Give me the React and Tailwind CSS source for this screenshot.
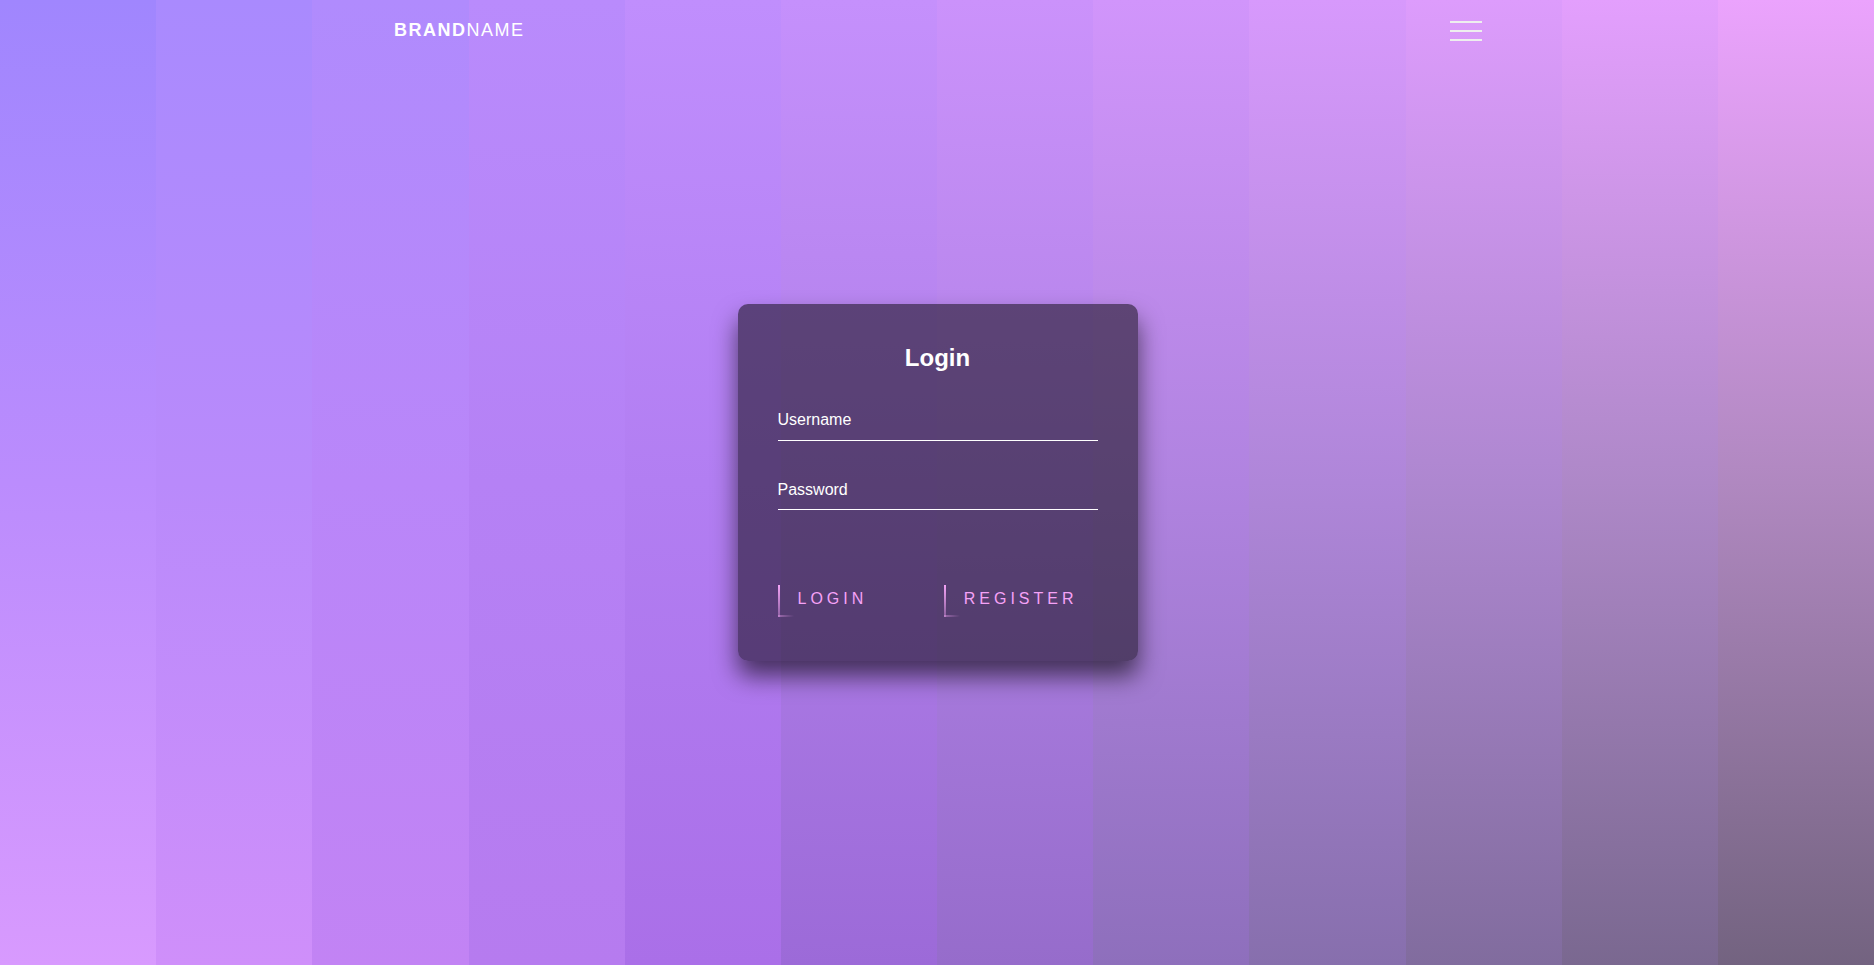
import React from "react";

const FONT = { fontFamily: '"Liberation Sans", Arial, sans-serif' };

function Stripes() {
  return (
    <div className="absolute inset-0 grid grid-cols-12">
      <div className="bg-[linear-gradient(to_bottom,#a086fe,#bb8cfd_50%,#d89afe)]" />
      <div className="bg-[linear-gradient(to_bottom,#a98afe,#b98afb_50%,#cf8ffa)]" />
      <div className="bg-[linear-gradient(to_bottom,#b08bfd,#b986f9_50%,#c283f4)]" />
      <div className="bg-[linear-gradient(to_bottom,#b98bfc,#b581f5_50%,#b67bef)]" />
      <div className="bg-[linear-gradient(to_bottom,#c08efd,#b27ef2_50%,#aa6fe8)]" />
      <div className="bg-[linear-gradient(to_bottom,#c590fc,#b07fe9_50%,#9c6ad8)]" />
      <div className="bg-[linear-gradient(to_bottom,#cb92fb,#b081e6_50%,#966ccb)]" />
      <div className="bg-[linear-gradient(to_bottom,#d195fb,#b083e0_50%,#8e6fbc)]" />
      <div className="bg-[linear-gradient(to_bottom,#d799fc,#af86d9_50%,#876fad)]" />
      <div className="bg-[linear-gradient(to_bottom,#dd9cfc,#ae87d0_50%,#816c9e)]" />
      <div className="bg-[linear-gradient(to_bottom,#e39ffd,#ae88c8_50%,#7a6890)]" />
      <div className="bg-[linear-gradient(to_bottom,#eba3fd,#b088c0_50%,#736380)]" />
    </div>
  );
}

function Field({ label, last }) {
  return (
    <div
      className={
        (last ? "" : "mb-[30px] ") +
        "border-b border-white py-[10px] text-[16px] leading-[18.4px] text-white"
      }
    >
      {label}
    </div>
  );
}

function LinkBtn({ children }) {
  return (
    <div className="relative inline-block px-[20px] py-[10px] text-[16px] leading-[18.4px] uppercase tracking-[4px] text-[#f5a2f7]">
      <span className="absolute left-0 top-[5px] bottom-[1px] w-[2px] bg-[linear-gradient(to_bottom,#f4a4f6,rgba(244,164,246,0.35))]" />
      <span className="absolute left-0 bottom-[1px] h-[2px] w-[16px] bg-[linear-gradient(to_right,rgba(244,164,246,0.45),rgba(244,164,246,0))]" />
      {children}
    </div>
  );
}

export default function App() {
  return (
    <div className="relative h-[965px] w-full overflow-hidden" style={FONT}>
      <Stripes />
      <div className="relative flex h-full flex-col">
        <nav className="mx-auto flex h-[60px] w-[1088px] translate-x-[1px] items-center justify-between">
          <div className="text-[18px] tracking-[1.5px] text-white">
            <span className="font-bold">BRAND</span>NAME
          </div>
          <div className="flex w-[32px] flex-col gap-[7px] pt-[1px]">
            <div className="h-[2px] w-full bg-[#eeeeee]" />
            <div className="h-[2px] w-full bg-[#eeeeee]" />
            <div className="h-[2px] w-full bg-[#eeeeee]" />
          </div>
        </nav>
        <main className="flex flex-1 items-center justify-center pb-[60px]">
          <div className="ml-[1px] w-[400px] rounded-[10px] bg-black/50 px-[40px] pt-[40px] pb-[43px] shadow-[0_15px_25px_rgba(0,0,0,0.6)]">
            <h2 className="mb-[30px] text-center text-[24px] font-bold leading-[27.6px] text-white">
              Login
            </h2>
            <Field label="Username" />
            <Field label="Password" last />
            <div className="mt-[70px] flex justify-between">
              <LinkBtn>Login</LinkBtn>
              <LinkBtn>Register</LinkBtn>
            </div>
          </div>
        </main>
      </div>
    </div>
  );
}
